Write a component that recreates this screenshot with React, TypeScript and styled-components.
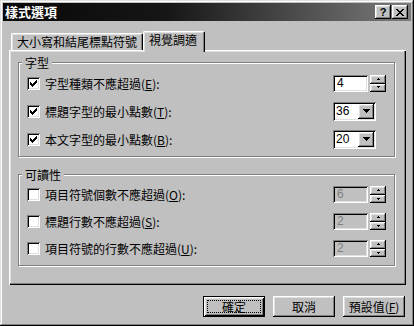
import React from "react";
import styled, { createGlobalStyle, css } from "styled-components";

const GlobalStyle = createGlobalStyle`
  * { box-sizing: border-box; }
  html, body { margin: 0; padding: 0; background: #c0c0c0; }
  body {
    font-family: "Noto Sans CJK TC", "Liberation Sans", sans-serif;
    font-size: 12px;
    line-height: 13px;
    color: #000;
  }
`;

const raised = css`
  box-shadow: inset -1px -1px #000, inset 1px 1px #fff, inset -2px -2px #808080,
    inset 2px 2px #dfdfdf;
`;

const sunken = css`
  box-shadow: inset 1px 1px #808080, inset -1px -1px #fff, inset 2px 2px #000,
    inset -2px -2px #dfdfdf;
`;

const Window = styled.div`
  width: 414px;
  height: 326px;
  padding: 3px;
  background: #c0c0c0;
  display: flex;
  flex-direction: column;
  box-shadow: inset -1px -1px #000, inset 1px 1px #dfdfdf, inset -2px -2px #808080,
    inset 2px 2px #fff;
`;

const TitleBar = styled.div`
  height: 18px;
  flex: none;
  display: flex;
  align-items: center;
  padding: 0 3px 0 2px;
  background: linear-gradient(90deg, #080808 0%, #161616 40%, #7c7c7c 100%);
`;

const Title = styled.div`
  flex: 1;
  color: #fff;
  font-weight: bold;
  font-size: 13px;
  line-height: 14px;
`;

const TitleButton = styled.div`
  width: 16px;
  height: 14px;
  margin-left: 1px;
  background: #c0c0c0;
  display: flex;
  align-items: center;
  justify-content: center;
  font-family: "Liberation Sans", sans-serif;
  font-weight: bold;
  font-size: 11px;
  line-height: 11px;
  ${raised}
`;

const Body = styled.div`
  flex: 1;
  display: flex;
  flex-direction: column;
  padding: 10px 5px 0 6px;
`;

const TabStrip = styled.div`
  height: 19px;
  display: flex;
  align-items: flex-end;
  padding-left: 2px;
`;

const Tab = styled.div<{ $active?: boolean }>`
  height: ${(p) => (p.$active ? 21 : 17)}px;
  margin-bottom: ${(p) => (p.$active ? -2 : 0)}px;
  padding: 1px ${(p) => (p.$active ? 7 : 5)}px 0 ${(p) => (p.$active ? 5 : 5)}px;
  position: relative;
  z-index: ${(p) => (p.$active ? 1 : 0)};
  background: #c0c0c0;
  border-top: 1px solid #fff;
  border-left: 1px solid #fff;
  border-right: 1px solid #000;
  border-radius: 2px 2px 0 0;
  box-shadow: inset -1px 0 #808080, inset 1px 1px #dfdfdf;
  white-space: nowrap;
`;

const Panel = styled.div`
  width: 397px;
  height: 235px;
  padding: 6px 11px 0 9px;
  display: flex;
  flex-direction: column;
  box-shadow: inset 1px 1px #fff, inset -1px -1px #000, inset -2px -2px #808080,
    inset 2px 2px #dfdfdf;
`;

const Group = styled.fieldset<{ $gap?: number }>`
  margin: ${(p) => p.$gap ?? 0}px 0 0 0;
  padding: 0 3px 3px 3px;
  min-inline-size: 0;
  border: 1px solid #808080;
  box-shadow: inset 1px 1px #fff, 1px 1px #fff;
`;

const Legend = styled.legend`
  padding: 0 3px;
  background: #c0c0c0;
  line-height: 13px;
`;

const Row = styled.div<{ $h: number }>`
  height: ${(p) => p.$h}px;
  display: flex;
  align-items: center;
  padding: 0 5px;
`;

const CheckBox = styled.div`
  width: 13px;
  height: 13px;
  flex: none;
  background: #fff;
  ${sunken}
  svg { display: block; }
`;

const Label = styled.div`
  flex: 1;
  margin-left: 5px;
  white-space: nowrap;
`;

const Controls = styled.div`
  width: 53px;
  flex: none;
  display: flex;
  align-items: center;
  gap: 2px;
`;

const Field = styled.div<{ $disabled?: boolean; $w: number; $h: number }>`
  width: ${(p) => p.$w}px;
  height: ${(p) => p.$h}px;
  padding: 2px 2px 2px 4px;
  display: flex;
  align-items: center;
  background: ${(p) => (p.$disabled ? "#c0c0c0" : "#fff")};
  color: ${(p) => (p.$disabled ? "#808080" : "#000")};
  font-family: "Liberation Sans", sans-serif;
  font-size: 12px;
  ${sunken}
`;

const FieldText = styled.div`
  flex: 1;
`;

const Spin = styled.div`
  width: 16px;
  height: 17px;
  display: flex;
  flex-direction: column;
`;

const SpinHalf = styled.div<{ $h: number }>`
  height: ${(p) => p.$h}px;
  display: flex;
  align-items: center;
  justify-content: center;
  background: #c0c0c0;
  ${raised}
  svg { display: block; }
`;

const DropButton = styled.div`
  width: 16px;
  height: 15px;
  flex: none;
  display: flex;
  align-items: center;
  justify-content: center;
  background: #c0c0c0;
  ${raised}
  svg { display: block; }
`;

const ButtonRow = styled.div`
  display: flex;
  justify-content: flex-end;
  gap: 8px;
  margin-top: 11px;
  padding-right: 1px;
`;

const Button = styled.div<{ $default?: boolean }>`
  width: 62px;
  height: 21px;
  position: relative;
  display: flex;
  align-items: center;
  justify-content: center;
  white-space: nowrap;
  background: #c0c0c0;
  ${(p) =>
    p.$default
      ? css`
          box-shadow: inset 1px 1px #000, inset -1px -1px #000, inset 2px 2px #fff,
            inset -2px -2px #000, inset 3px 3px #dfdfdf, inset -3px -3px #808080;
          &::after {
            content: "";
            position: absolute;
            inset: 4px;
            border: 1px dotted #000;
          }
        `
      : raised}
`;

const CheckMark = () => (
  <svg width="13" height="13" viewBox="0 0 13 13" shapeRendering="crispEdges">
    <path
      fill="#000"
      d="M9 3h1v1h-1z M8 4h2v1h-2z M3 5h1v1h-1z M7 5h3v1h-3z M3 6h2v1h-2z M6 6h3v1h-3z M3 7h5v1h-5z M4 8h3v1h-3z M5 9h1v1h-1z"
    />
  </svg>
);

const UpArrow = () => (
  <svg width="5" height="3" viewBox="0 0 5 3" shapeRendering="crispEdges">
    <path fill="#000" d="M2 0h1v1h-1z M1 1h3v1h-3z" />
  </svg>
);

const DownArrow = () => (
  <svg width="5" height="3" viewBox="0 0 5 3" shapeRendering="crispEdges">
    <path fill="#000" d="M1 0h3v1h-3z M2 1h1v1h-1z" />
  </svg>
);

const ComboArrow = () => (
  <svg width="7" height="4" viewBox="0 0 7 4" shapeRendering="crispEdges">
    <path fill="#000" d="M0 0h7v1h-7z M1 1h5v1h-5z M2 2h3v1h-3z M3 3h1v1h-1z" />
  </svg>
);

const CloseGlyph = () => (
  <svg width="8" height="7" viewBox="0 0 8 7" shapeRendering="crispEdges">
    <path
      fill="#000"
      d="M0 0h2v1h-2z M6 0h2v1h-2z M1 1h2v1h-2z M5 1h2v1h-2z M2 2h4v1h-4z M3 3h2v1h-2z M2 4h4v1h-4z M1 5h2v1h-2z M5 5h2v1h-2z M0 6h2v1h-2z M6 6h2v1h-2z"
    />
  </svg>
);

type Control =
  | { kind: "spin"; value: string; disabled?: boolean }
  | { kind: "combo"; value: string };

interface Option {
  label: string;
  accel: string;
  checked: boolean;
  control: Control;
}

const fontOptions: Option[] = [
  { label: "字型種類不應超過", accel: "E", checked: true, control: { kind: "spin", value: "4" } },
  { label: "標題字型的最小點數", accel: "T", checked: true, control: { kind: "combo", value: "36" } },
  { label: "本文字型的最小點數", accel: "B", checked: true, control: { kind: "combo", value: "20" } },
];

const readOptions: Option[] = [
  { label: "項目符號個數不應超過", accel: "O", checked: false, control: { kind: "spin", value: "6", disabled: true } },
  { label: "標題行數不應超過", accel: "S", checked: false, control: { kind: "spin", value: "2", disabled: true } },
  { label: "項目符號的行數不應超過", accel: "U", checked: false, control: { kind: "spin", value: "2", disabled: true } },
];

const ControlView = ({ control }: { control: Control }) => {
  if (control.kind === "combo") {
    return (
      <Controls>
        <Field $w={43} $h={19} style={{ paddingLeft: 3 }}>
          <FieldText>{control.value}</FieldText>
          <DropButton>
            <ComboArrow />
          </DropButton>
        </Field>
      </Controls>
    );
  }
  return (
    <Controls>
      <Field $w={35} $h={17} $disabled={control.disabled}>
        <FieldText>{control.value}</FieldText>
      </Field>
      <Spin>
        <SpinHalf $h={9}>
          <UpArrow />
        </SpinHalf>
        <SpinHalf $h={8}>
          <DownArrow />
        </SpinHalf>
      </Spin>
    </Controls>
  );
};

const OptionRow = ({ option, height }: { option: Option; height: number }) => (
  <Row $h={height}>
    <CheckBox>{option.checked && <CheckMark />}</CheckBox>
    <Label>
      {option.label}(<u>{option.accel}</u>):
    </Label>
    <ControlView control={option.control} />
  </Row>
);

export default function App() {
  return (
    <>
      <GlobalStyle />
      <Window>
        <TitleBar>
          <Title>樣式選項</Title>
          <TitleButton>?</TitleButton>
          <TitleButton>
            <CloseGlyph />
          </TitleButton>
        </TitleBar>
        <Body>
          <TabStrip>
            <Tab>大小寫和結尾標點符號</Tab>
            <Tab $active>視覺調適</Tab>
          </TabStrip>
          <Panel>
            <Group>
              <Legend>字型</Legend>
              {fontOptions.map((o) => (
                <OptionRow key={o.accel} option={o} height={28} />
              ))}
            </Group>
            <Group $gap={11}>
              <Legend>可讀性</Legend>
              {readOptions.map((o) => (
                <OptionRow key={o.accel} option={o} height={27} />
              ))}
            </Group>
          </Panel>
          <ButtonRow>
            <Button $default>確定</Button>
            <Button>取消</Button>
            <Button>
              預設值(<u>F</u>)
            </Button>
          </ButtonRow>
        </Body>
      </Window>
    </>
  );
}
